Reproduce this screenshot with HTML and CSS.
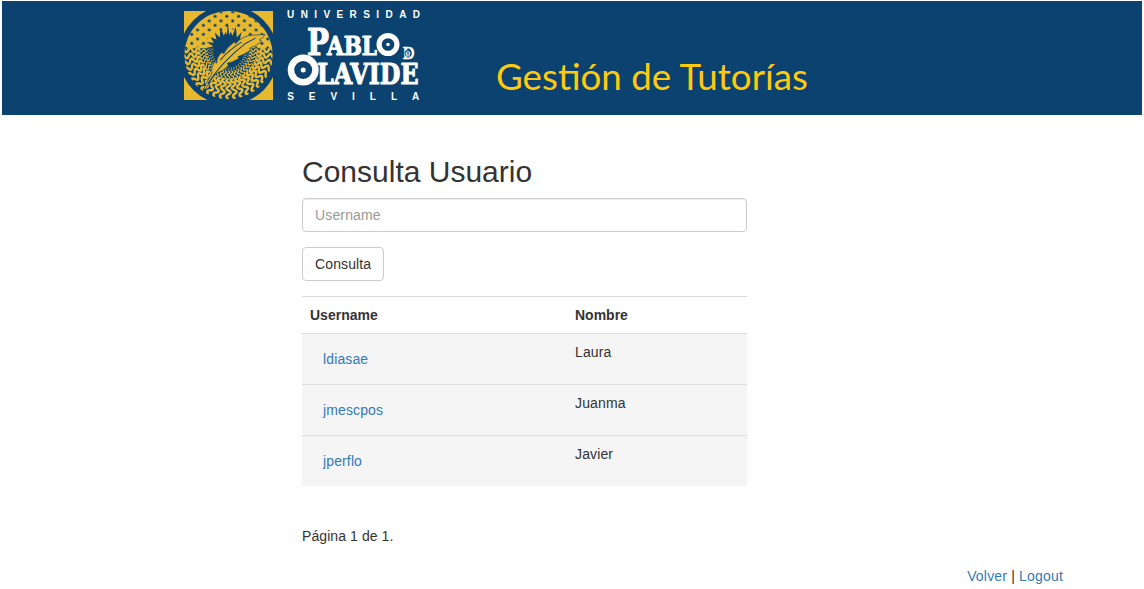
FILE: index.html
```html
<!DOCTYPE html>
<html lang="es">
<head>
<meta charset="utf-8">
<title>Gestión de Tutorías</title>
<link rel="stylesheet" href="styles.css">
</head>
<body>
<header class="banner">
  <svg class="emblem" viewBox="24 34 266 266" aria-hidden="true">
    <defs>
      <pattern id="dots" x="4" y="44" width="35" height="27" patternUnits="userSpaceOnUse">
        <circle cx="8" cy="6" r="4.4" fill="#0c426f"/>
        <circle cx="25.5" cy="19.5" r="4.4" fill="#0c426f"/>
      </pattern>
      <clipPath id="disc"><circle cx="157" cy="166" r="132"/></clipPath>
      <g id="wave" fill="none" stroke="#e8b92f">
        <path stroke-width="2" d="M42 0 Q44 -4 47 0 T52 0 T57 0 T63 0"/>
        <path stroke-width="4" d="M63 0 Q66.5 -8 70 0 T78 0 T87 0"/>
        <path stroke-width="7.5" d="M86 0 Q91.5 13 97 0 T108 0 T120 0 T132 0 T146 0"/>
      </g>
      <g id="waves">
        <use href="#wave"/>
        <use href="#wave" transform="rotate(8.18)"/><use href="#wave" transform="rotate(16.36)"/>
        <use href="#wave" transform="rotate(24.55)"/><use href="#wave" transform="rotate(32.73)"/>
        <use href="#wave" transform="rotate(40.91)"/><use href="#wave" transform="rotate(49.09)"/>
        <use href="#wave" transform="rotate(57.27)"/><use href="#wave" transform="rotate(65.45)"/>
        <use href="#wave" transform="rotate(73.64)"/><use href="#wave" transform="rotate(81.82)"/>
      </g>
    </defs>
    <path fill="#e8b92f" d="M24 34H290V300H24Z"/>
    <circle cx="157" cy="166" r="148" fill="#0c426f"/>
    <g clip-path="url(#disc)">
      <path fill="#e8b92f" d="M24 34H290V145H24Z"/>
      <path fill="url(#dots)" d="M24 34H290V145H24Z"/>
      <path fill="#e8b92f" d="M88 145Q92 108 112 96L157 86 202 96Q222 108 226 145Z"/>
      <path fill="#0c426f" d="M84 146L112 139 91 127 113 129 103 112 121 119 116 98 131 113 133 81 143 108 149 96 152 106 155 68 159 106 164 96 169 108 179 80 182 113 196 97 191 119 211 111 200 129 222 127 202 139 230 146Z"/>
      <g transform="translate(157 151)">
        <use href="#waves"/><use href="#waves" transform="rotate(90)"/><use href="#wave" transform="rotate(180)"/>
      </g>
      <circle cx="157" cy="157" r="46" fill="#0c426f"/>
    </g>
    <path fill="#e8b92f" stroke="#0c426f" stroke-width="2" d="M81 272Q92 244 107 222Q103 204 116 185L122 190Q121 170 138 157L143 162Q151 143 175 126L178 132Q200 106 234 106L266 104Q260 116 249 120L256 124Q238 141 220 145L224 150Q198 168 185 170L188 176Q169 188 153 190L157 197Q142 213 121 220Q103 239 89 266Z"/>
    <path fill="none" stroke="#0c426f" stroke-width="3" d="M95 251Q137 186 206 132L238 115M132 181Q161 148 196 127"/>
  </svg>
  <svg class="wordmark" viewBox="0 0 150 114" role="img" aria-label="Universidad Pablo de Olavide Sevilla">
    <g class="wordmark-small">
      <text x="7" y="17.3" textLength="133">UNIVERSIDAD</text>
      <text x="7.2" y="98.7" textLength="132">SEVILLA</text>
    </g>
    <g class="wordmark-large">
      <text x="27" y="54" font-size="37" textLength="22" lengthAdjust="spacingAndGlyphs">P</text>
      <text x="47" y="53.6" font-size="26.5" textLength="50" lengthAdjust="spacingAndGlyphs">ABL</text>
      <text x="98" y="53.6" font-size="26.5" textLength="20" lengthAdjust="spacingAndGlyphs">O</text>
      <text x="9" y="82" font-size="36" textLength="28" lengthAdjust="spacingAndGlyphs">O</text>
      <text x="37" y="82.5" font-size="28" textLength="101.5" lengthAdjust="spacingAndGlyphs">LAVIDE</text>
      <text class="wordmark-de" x="122.5" y="58" font-size="16" textLength="12" lengthAdjust="spacingAndGlyphs">D</text>
    </g>
    <circle cx="108" cy="43.5" r="11.5" fill="#fff"/>
    <circle cx="108" cy="43.5" r="6.3" fill="#0c426f"/><circle cx="108" cy="43.5" r="1.8" fill="#fff"/>
    <circle cx="23.2" cy="69" r="15.5" fill="#fff"/>
    <circle cx="23.2" cy="69" r="9" fill="#0c426f"/><circle cx="23.2" cy="69" r="2.5" fill="#fff"/>
    <circle cx="128.3" cy="52.2" r="3.5" fill="#0c426f"/>
    <path d="M126.3 53H130Q130 50.5 128 50.5T126 53T130 55" fill="none" stroke="#fff"/>
  </svg>
  <svg class="title" viewBox="0 0 330 60" role="img" aria-label="Gestión de Tutorías">
    <text x="16" y="49" textLength="312" lengthAdjust="spacingAndGlyphs">Gestión de Tutorías</text>
  </svg>
</header>
<main class="content">
  <h2 class="heading">Consulta Usuario</h2>
  <form class="search">
    <input class="field" type="text" placeholder="Username">
    <button class="button" type="button">Consulta</button>
  </form>
  <table class="users">
    <thead><tr><th class="user-column">Username</th><th>Nombre</th></tr></thead>
    <tbody>
      <tr><td><a class="user-link" href="#">ldiasae</a></td><td>Laura</td></tr>
      <tr><td><a class="user-link" href="#">jmescpos</a></td><td>Juanma</td></tr>
      <tr><td><a class="user-link" href="#">jperflo</a></td><td>Javier</td></tr>
    </tbody>
  </table>
  <p class="pages">Página 1 de 1.</p>
</main>
<footer class="footer"><a href="#">Volver</a> | <a href="#">Logout</a></footer>
</body>
</html>
```
FILE: styles.css
```css
* { box-sizing: border-box; }
body {
  margin: 0;
  padding: 1px 2px 0;
  background: #fff;
  color: #333;
  font: 14px/20px "Liberation Sans", Arial, sans-serif;
  overflow: hidden;
}
a { color: #337ab7; text-decoration: none; }
.banner {
  display: flex;
  height: 114px;
  padding-left: 182px;
  background: #0c426f;
}
.emblem { width: 89px; height: 89px; margin-top: 10px; }
.wordmark { width: 150px; height: 114px; margin-left: 7px; overflow: visible; }
.wordmark-small {
  fill: #fff;
  font: bold 10px "Liberation Sans", Arial, sans-serif;
}
.wordmark-large {
  fill: #fff;
  stroke: #fff;
  stroke-width: 1.1px;
  stroke-linejoin: round;
  font-family: "DejaVu Serif", serif;
  font-weight: bold;
}
.wordmark-de { stroke-width: .3px; }
.title {
  width: 330px;
  height: 60px;
  margin: 40px 0 0 50px;
  fill: #ffc90e;
  font: 36px Lato, sans-serif;
}
.content { width: 445px; margin-left: 300px; padding-top: 40px; }
.heading { margin: 0 0 10px; font-size: 30px; font-weight: 400; line-height: 33px; }
.search { display: flex; flex-direction: column; align-items: flex-start; gap: 15px; }
.field {
  width: 100%;
  height: 34px;
  padding: 6px 12px;
  border: 1px solid #ccc;
  border-radius: 4px;
  box-shadow: inset 0 1px 1px rgba(0, 0, 0, .075);
  font: inherit;
  letter-spacing: .15px;
}
.field::placeholder { color: #999; opacity: 1; }
.button {
  height: 34px;
  padding: 6px 12px;
  border: 1px solid #ccc;
  border-radius: 4px;
  background: #fff;
  color: #333;
  font: inherit;
  letter-spacing: .12px;
}
.users { width: 100%; margin-top: 15px; border-collapse: separate; border-spacing: 0; }
.users th, .users td {
  padding: 8px;
  border-top: 1px solid #ddd;
  text-align: left;
  vertical-align: top;
}
.users td { background: #f5f5f5; letter-spacing: .13px; }
.user-column { width: 265px; }
.user-link { display: inline-block; padding: 7px 13px; vertical-align: middle; }
.pages { margin: 40px 0 20px; letter-spacing: .08px; }
.footer { padding-right: 79px; text-align: right; letter-spacing: .18px; }
```
